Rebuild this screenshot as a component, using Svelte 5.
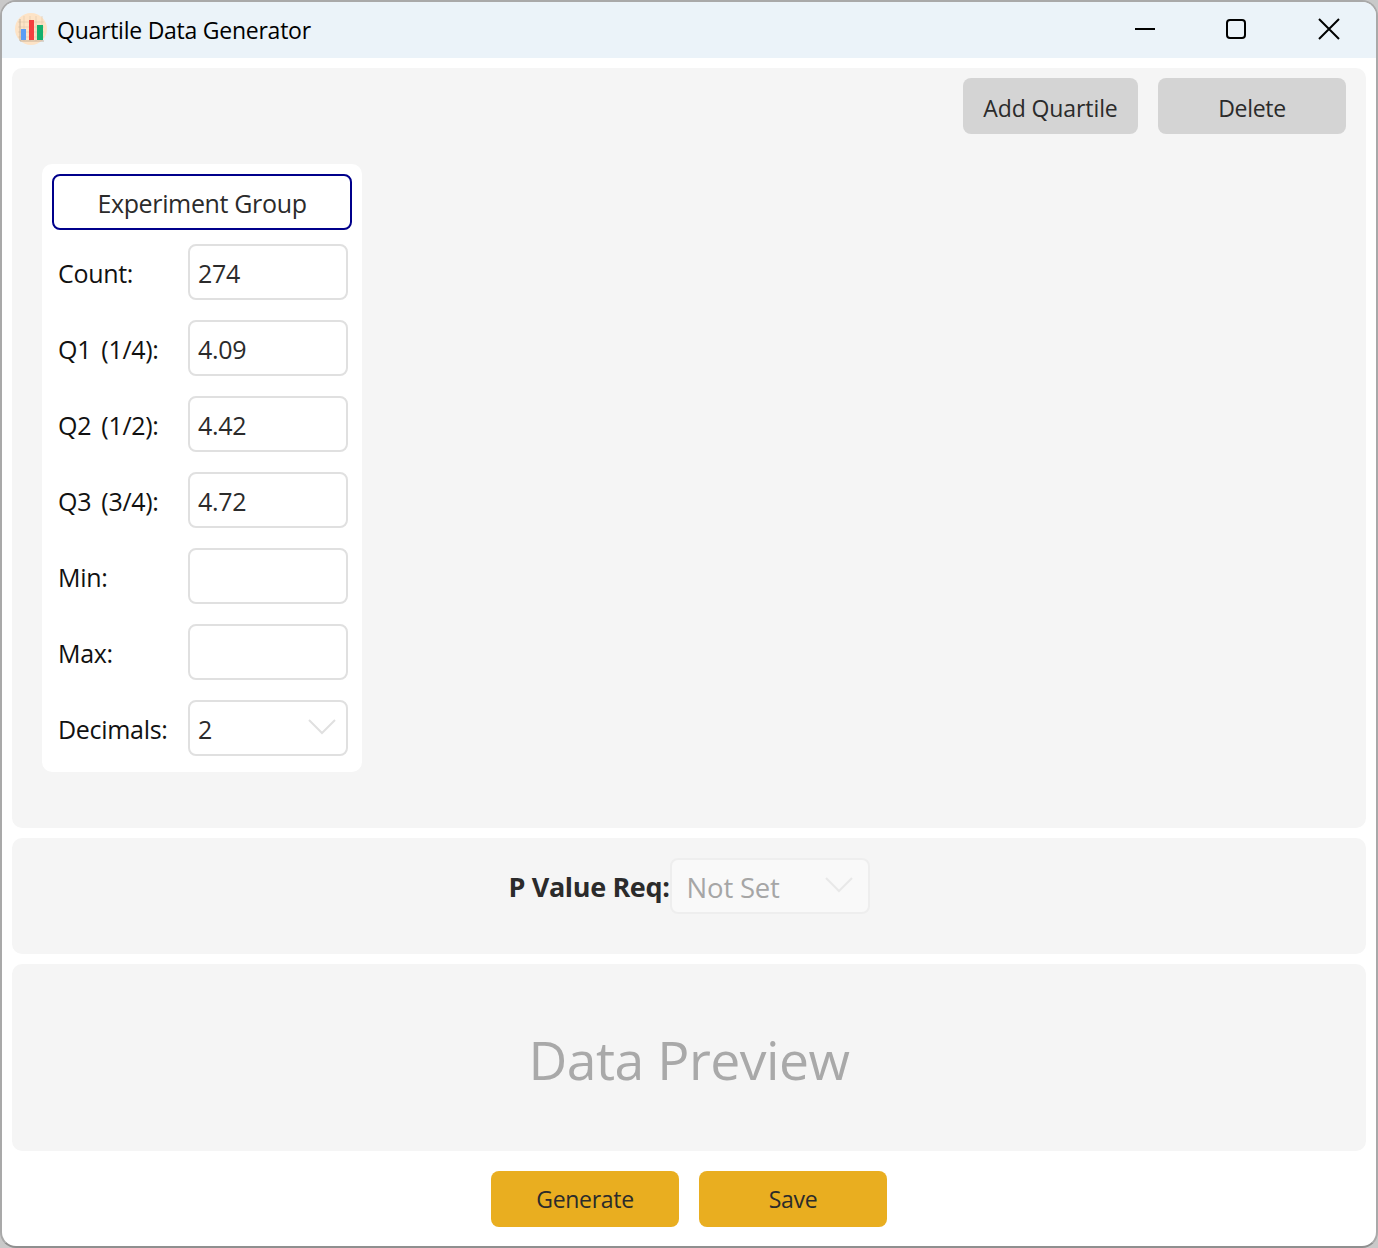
<script lang="ts">
  const fields = [
    { label: 'Count:', value: '274' },
    { label: 'Q1 (1/4):', value: '4.09' },
    { label: 'Q2 (1/2):', value: '4.42' },
    { label: 'Q3 (3/4):', value: '4.72' },
    { label: 'Min:', value: '' },
    { label: 'Max:', value: '' }
  ];
</script>

<div class="window">
  <header class="titlebar">
    <svg class="app-icon" width="34" height="34" viewBox="0 0 34 34">
      <circle cx="17" cy="17" r="16" fill="#fde3c6" />
      <path d="M4 10H30M4 15H30M4 20H30M4 25H30M10 4V29M16 4V29M22 4V29M28 4V29" stroke="#e3c9ac" stroke-width="0.7" fill="none" />
      <path d="M6 7V29H30" stroke="#b9a48e" stroke-width="0.8" fill="none" />
      <rect x="7" y="17" width="5" height="11" fill="#5b9df5" />
      <rect x="15" y="8" width="5" height="20" fill="#f43f3f" />
      <rect x="23" y="13" width="6" height="15" fill="#14b06e" />
    </svg>
    <span class="title">Quartile Data Generator</span>
    <div class="controls">
      <button class="ctl" aria-label="Minimize">
        <svg width="22" height="22" viewBox="0 0 22 22"><path d="M1 11H21" stroke="#000" stroke-width="2" /></svg>
      </button>
      <button class="ctl" aria-label="Maximize">
        <svg width="22" height="22" viewBox="0 0 22 22"><rect x="2" y="2" width="18" height="18" rx="3" fill="none" stroke="#000" stroke-width="2" /></svg>
      </button>
      <button class="ctl" aria-label="Close">
        <svg width="22" height="22" viewBox="0 0 22 22"><path d="M1 1L21 21M21 1L1 21" stroke="#000" stroke-width="2" /></svg>
      </button>
    </div>
  </header>

  <main class="content">
    <section class="panel groups">
      <div class="toolbar">
        <button class="grey add">Add Quartile</button>
        <button class="grey del">Delete</button>
      </div>
      <div class="card">
        <button class="group-name">Experiment Group</button>
        <div class="rows">
          {#each fields as f}
            <div class="row">
              <span class="lbl">{f.label}</span>
              <div class="input">{f.value}</div>
            </div>
          {/each}
          <div class="row">
            <span class="lbl">Decimals:</span>
            <div class="input select">
              2
              <svg class="chev" width="28" height="16" viewBox="0 0 28 16"><path d="M1 1L14 14L27 1" fill="none" stroke="#e0e0e0" stroke-width="2" /></svg>
            </div>
          </div>
        </div>
      </div>
    </section>

    <section class="panel pvalue">
      <span class="p-label">P Value Req:</span>
      <div class="input select disabled">
        Not Set
        <svg class="chev" width="28" height="16" viewBox="0 0 28 16"><path d="M1 1L14 14L27 1" fill="none" stroke="#e8e8e8" stroke-width="2" /></svg>
      </div>
    </section>

    <section class="panel preview">Data Preview</section>

    <footer class="actions">
      <button class="gold">Generate</button>
      <button class="gold">Save</button>
    </footer>
  </main>
</div>

<style>
  :global(body) {
    margin: 0;
    background: #c9c9c9;
  }

  .window {
    box-sizing: border-box;
    width: 1378px;
    height: 1248px;
    border: 2px solid #a9a9a9;
    border-bottom-color: #8f8f8f;
    border-radius: 16px;
    background: #fff;
    overflow: hidden;
    font-family: "Open Sans", "Noto Sans", sans-serif;
    font-size: 23px;
    color: #2b2b2b;
    letter-spacing: -0.3px;
  }

  button {
    font: inherit;
    letter-spacing: inherit;
    color: inherit;
    border: none;
    padding: 0;
  }

  .titlebar {
    height: 56px;
    display: flex;
    align-items: center;
    background: #ebf3f9;
  }

  .app-icon {
    margin: -2px 9px 0 12px;
  }

  .title {
    color: #000;
    letter-spacing: -0.25px;
  }

  .controls {
    margin-left: auto;
    display: flex;
    margin-top: -2px;
    padding-right: 1px;
  }

  .ctl {
    width: 92px;
    height: 56px;
    background: none;
    display: flex;
    align-items: center;
    justify-content: center;
  }

  .ctl:nth-child(2) {
    position: relative;
    left: -1px;
  }

  .content {
    display: flex;
    flex-direction: column;
    gap: 10px;
    padding: 10px 10px 0;
  }

  .panel {
    background: #f5f5f5;
    border-radius: 10px;
  }

  .groups {
    height: 760px;
    box-sizing: border-box;
    padding: 10px 20px 0 30px;
  }

  .toolbar {
    display: flex;
    justify-content: flex-end;
    gap: 20px;
    margin-bottom: 30px;
  }

  .grey {
    height: 56px;
    padding-top: 3px;
    background: #d4d4d4;
    border-radius: 8px;
  }

  .add {
    width: 175px;
    letter-spacing: -0.1px;
  }

  .del {
    width: 188px;
  }

  .card {
    width: 320px;
    box-sizing: border-box;
    padding: 10px 14px 16px 10px;
    background: #fff;
    border-radius: 10px;
  }

  .group-name {
    display: block;
    box-sizing: border-box;
    width: 300px;
    height: 56px;
    padding-top: 2px;
    font-size: 25px;
    letter-spacing: -0.35px;
    background: #fff;
    border: 2px solid #00008b;
    border-radius: 8px;
  }

  .rows {
    display: flex;
    flex-direction: column;
    gap: 20px;
    margin-top: 14px;
    font-size: 25px;
  }

  .row {
    display: flex;
    align-items: center;
  }

  .lbl {
    width: 130px;
    margin-left: 6px;
    padding-top: 2px;
    color: #111;
    word-spacing: 4px;
  }

  .input {
    box-sizing: border-box;
    width: 160px;
    height: 56px;
    display: flex;
    align-items: center;
    padding: 2px 8px 0;
    background: #fff;
    border: 2px solid #e0e0e0;
    border-radius: 8px;
  }

  .select {
    justify-content: space-between;
  }

  .chev {
    margin-right: 2px;
    margin-top: -4px;
  }

  .pvalue {
    height: 116px;
    box-sizing: border-box;
    padding-top: 20px;
    display: flex;
    justify-content: center;
    align-items: flex-start;
  }

  .p-label {
    font-weight: 700;
    font-size: 27px;
    line-height: 58px;
    letter-spacing: -0.35px;
    color: #2b2b2b;
  }

  .disabled {
    width: 200px;
    background: #f9f9f9;
    border-color: #eeeeee;
    color: #a6a6a6;
    font-size: 27.5px;
    letter-spacing: -0.2px;
    padding-left: 15px;
    padding-right: 15px;
  }

  .disabled .chev {
    margin-right: 0;
  }

  .preview {
    height: 187px;
    padding-top: 4px;
    box-sizing: border-box;
    display: flex;
    align-items: center;
    justify-content: center;
    font-size: 53.5px;
    letter-spacing: -0.5px;
    color: #a9a9a9;
  }

  .actions {
    display: flex;
    justify-content: center;
    gap: 20px;
    margin-top: 10px;
  }

  .gold {
    width: 188px;
    height: 56px;
    background: #e9ae20;
    border-radius: 8px;
  }
</style>
